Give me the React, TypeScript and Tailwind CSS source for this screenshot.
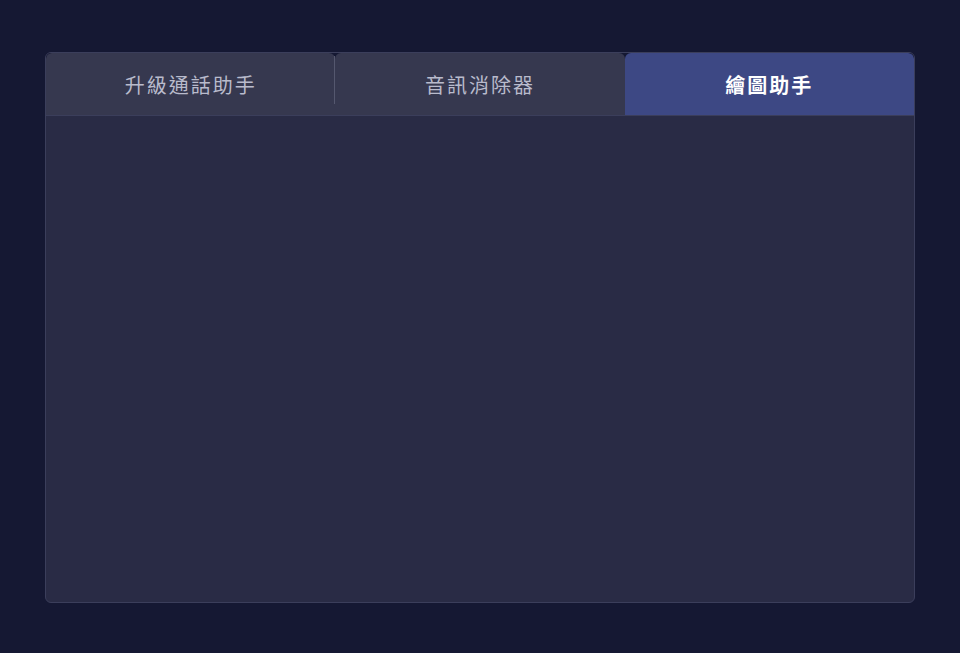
const TABS = ["升級通話助手", "音訊消除器", "繪圖助手"];

export default function App() {
  const active = 2;
  return (
    <div className="min-h-[653px] w-full bg-[#151833] px-[45px] pt-[52px] pb-[50px] font-['Noto_Sans_CJK_TC','Noto_Sans',sans-serif]">
      <div className="flex h-[551px] flex-col overflow-hidden rounded-[6px] border border-[#3b3e5b] bg-[#292b45]">
        {/* Tabs */}
        <div className="flex h-[62px] shrink-0 bg-[#151833]">
          {TABS.map((t, i) => (
            <div
              key={t}
              className={
                i === active
                  ? "flex flex-1 items-center justify-center rounded-t-[6px] bg-[#3d4884] pt-[2px] text-[20px] font-bold tracking-[0.1em] text-white"
                  : "relative flex flex-1 items-center justify-center rounded-t-[6px] bg-[#36384f] pt-[2px] text-[20px] tracking-[0.1em] text-[#b9bbcc]"
              }
            >
              {t}
              {i === 0 && (
                <span className="absolute right-0 top-[3px] h-[48px] w-px bg-[#55586f]" />
              )}
            </div>
          ))}
        </div>
        <div className="h-px bg-[#3b3e5b]" />
        <div className="flex-1" />
      </div>
    </div>
  );
}
